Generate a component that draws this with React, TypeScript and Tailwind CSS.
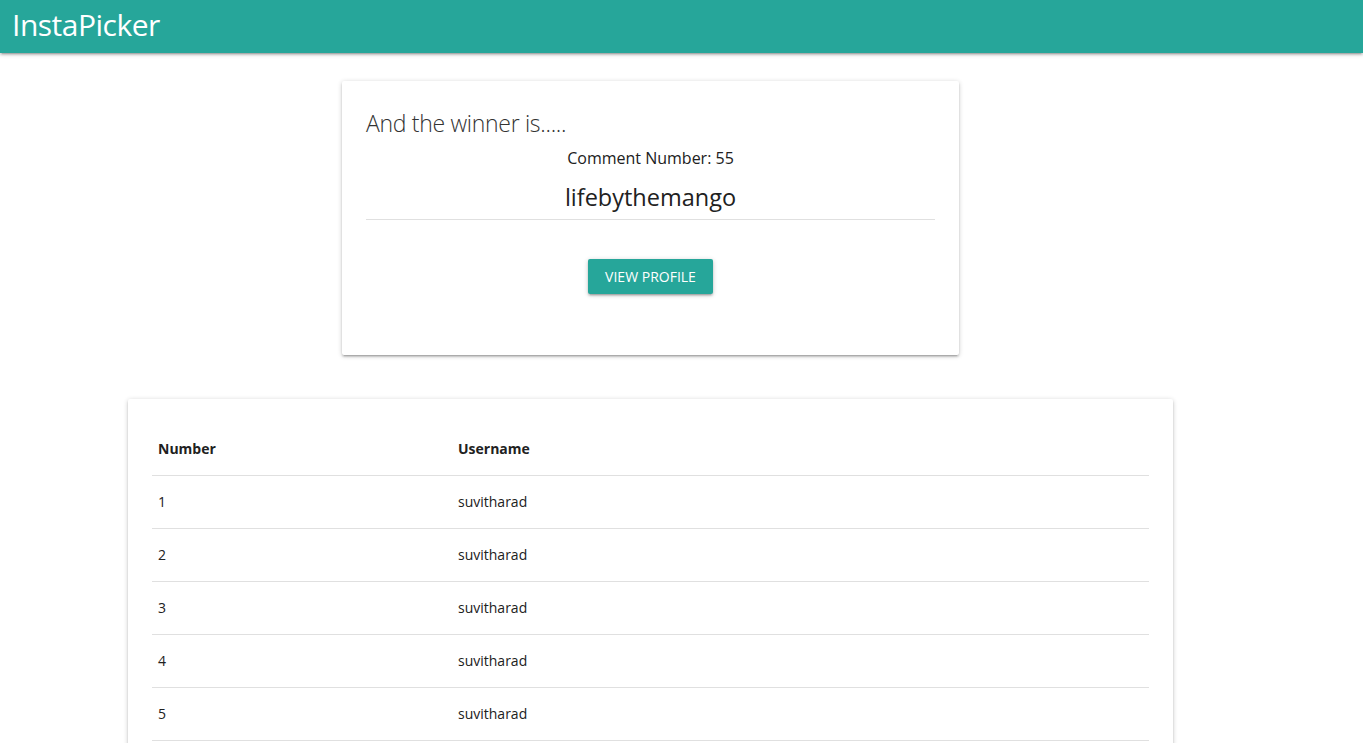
import React from "react";

const font = { fontFamily: '"Open Sans", "Noto Sans", Arial, sans-serif' };
const shadow =
  "shadow-[0_2px_2px_0_rgba(0,0,0,0.14),0_3px_1px_-2px_rgba(0,0,0,0.12),0_1px_5px_0_rgba(0,0,0,0.2)]";

export default function App() {
  const rows = [1, 2, 3, 4, 5, 6, 7, 8];
  return (
    <div className="min-h-screen bg-white text-[#212121]" style={font}>
      <nav className="h-[53px] bg-[#26a69a] flex items-center px-3 shadow-[0_2px_2px_0_rgba(0,0,0,0.14),0_3px_1px_-2px_rgba(0,0,0,0.12),0_1px_5px_0_rgba(0,0,0,0.2)]">
        <span className="text-white text-[30px] font-normal leading-none tracking-[-0.5px] -mt-[4px]">InstaPicker</span>
      </nav>

      <div className="w-[1301px]">
        <div className="flex justify-center mt-[28px]">
          <div className="w-[617px] bg-white rounded-[2px] shadow-[0_2px_2px_0_rgba(0,0,0,0.14),0_3px_1px_-2px_rgba(0,0,0,0.12),0_1px_5px_0_rgba(0,0,0,0.2)] px-6 pt-[26px] pb-[61px]">
            <div className="text-[23px] font-light leading-8 text-[#333] tracking-[-0.3px]">And the winner is.....</div>
            <div className="text-center text-[16px] leading-6 mt-[7px]">Comment Number: 55</div>
            <div className="text-center text-[23.5px] leading-8 mt-[11px] pb-[6px] border-b border-[#e0e0e0]">lifebythemango</div>
            <div className="flex justify-center mt-[39px]">
              <button className={`h-[35px] px-[17px] bg-[#26a69a] text-white text-[14px] uppercase rounded-[2px] ${shadow}`}>
                View Profile
              </button>
            </div>
          </div>
        </div>

        <div className="flex justify-center mt-[44px]">
          <div className="w-[1045px] bg-white rounded-[2px] shadow-[0_2px_2px_0_rgba(0,0,0,0.14),0_3px_1px_-2px_rgba(0,0,0,0.12),0_1px_5px_0_rgba(0,0,0,0.2)] p-6">
            <table className="w-full border-collapse text-[14px]">
              <thead>
                <tr className="border-b border-[#e0e0e0]">
                  <th className="w-[300px] text-left font-bold px-[6px] py-[15px] leading-[22px]">Number</th>
                  <th className="text-left font-bold px-[6px] py-[15px] leading-[22px]">Username</th>
                </tr>
              </thead>
              <tbody>
                {rows.map((n) => (
                  <tr key={n} className="border-b border-[#e0e0e0]">
                    <td className="px-[6px] py-[15px] leading-[22px]">{n}</td>
                    <td className="px-[6px] py-[15px] leading-[22px]">suvitharad</td>
                  </tr>
                ))}
              </tbody>
            </table>
          </div>
        </div>
      </div>
    </div>
  );
}
